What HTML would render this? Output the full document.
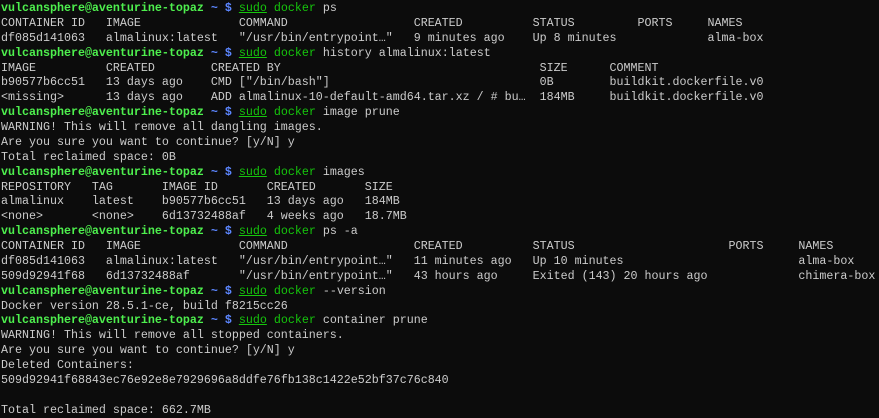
<!DOCTYPE html>
<html><head><style>
html,body{margin:0;padding:0;background:#0c0c0c;width:879px;height:418px;overflow:hidden}
pre{margin:0;padding:1px 0 0 1px;font-family:"Liberation Mono",monospace;font-size:11.67px;line-height:14.88px;color:#cccccc;white-space:pre}
.p{color:#4ef04e;font-weight:bold}
.b{color:#5c86ff;font-weight:bold}
.s{color:#16c60c;text-decoration:underline}
.g{color:#16c60c}
</style></head><body><pre><span class="p">vulcansphere@aventurine-topaz</span> <span class="b">~ $</span> <span class="s">sudo</span> <span class="g">docker</span> ps
CONTAINER ID   IMAGE              COMMAND                  CREATED          STATUS         PORTS     NAMES
df085d141063   almalinux:latest   "/usr/bin/entrypoint…"   9 minutes ago    Up 8 minutes             alma-box
<span class="p">vulcansphere@aventurine-topaz</span> <span class="b">~ $</span> <span class="s">sudo</span> <span class="g">docker</span> history almalinux:latest
IMAGE          CREATED        CREATED BY                                     SIZE      COMMENT
b90577b6cc51   13 days ago    CMD ["/bin/bash"]                              0B        buildkit.dockerfile.v0
&lt;missing&gt;      13 days ago    ADD almalinux-10-default-amd64.tar.xz / # bu…  184MB     buildkit.dockerfile.v0
<span class="p">vulcansphere@aventurine-topaz</span> <span class="b">~ $</span> <span class="s">sudo</span> <span class="g">docker</span> image prune
WARNING! This will remove all dangling images.
Are you sure you want to continue? [y/N] y
Total reclaimed space: 0B
<span class="p">vulcansphere@aventurine-topaz</span> <span class="b">~ $</span> <span class="s">sudo</span> <span class="g">docker</span> images
REPOSITORY   TAG       IMAGE ID       CREATED       SIZE
almalinux    latest    b90577b6cc51   13 days ago   184MB
&lt;none&gt;       &lt;none&gt;    6d13732488af   4 weeks ago   18.7MB
<span class="p">vulcansphere@aventurine-topaz</span> <span class="b">~ $</span> <span class="s">sudo</span> <span class="g">docker</span> ps -a
CONTAINER ID   IMAGE              COMMAND                  CREATED          STATUS                      PORTS     NAMES
df085d141063   almalinux:latest   "/usr/bin/entrypoint…"   11 minutes ago   Up 10 minutes                         alma-box
509d92941f68   6d13732488af       "/usr/bin/entrypoint…"   43 hours ago     Exited (143) 20 hours ago             chimera-box
<span class="p">vulcansphere@aventurine-topaz</span> <span class="b">~ $</span> <span class="s">sudo</span> <span class="g">docker</span> --version
Docker version 28.5.1-ce, build f8215cc26
<span class="p">vulcansphere@aventurine-topaz</span> <span class="b">~ $</span> <span class="s">sudo</span> <span class="g">docker</span> container prune
WARNING! This will remove all stopped containers.
Are you sure you want to continue? [y/N] y
Deleted Containers:
509d92941f68843ec76e92e8e7929696a8ddfe76fb138c1422e52bf37c76c840

Total reclaimed space: 662.7MB</pre></body></html>
